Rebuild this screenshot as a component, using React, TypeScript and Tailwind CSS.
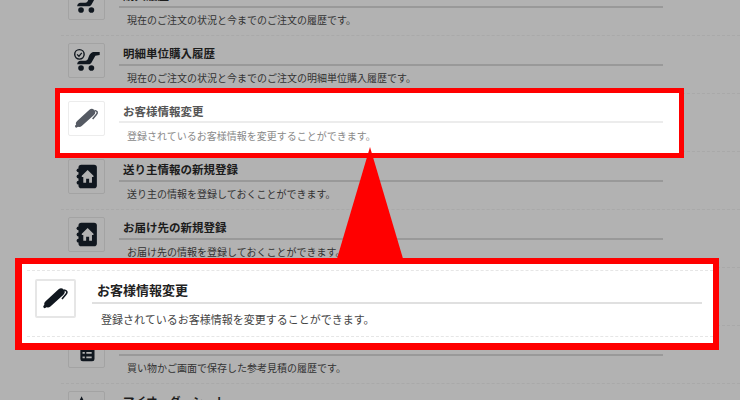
const font = "font-['Noto_Sans_CJK_JP','Noto_Sans',sans-serif]";

const CartIcon = ({ clock = false }: { clock?: boolean }) => (
  <svg viewBox="0 0 37 35" className="h-full w-full" fill="#10171f">
    {clock && (
      <g>
        <circle cx="11" cy="11" r="5" fill="none" stroke="#10171f" strokeWidth="1.5" />
        <path d="M8.5 11l2 2 3-3.5" fill="none" stroke="#10171f" strokeWidth="1.3" />
      </g>
    )}
    <path d="M32.5 8.6v3l-4.6.8-3.6 6.4c-1 1.8-2.2 2.8-4 2.8H8.6c.2-2.4 1.6-3.8 3.6-3.8h5c1.6-.2 2.6-1.2 3.2-3 1.2-3.4 3-6.2 6-6.2z" />
    <circle cx="12.7" cy="25.5" r="3" />
    <circle cx="23.7" cy="25.5" r="3" />
  </svg>
);

const PenIcon = ({ color }: { color: string }) => (
  <svg viewBox="0 0 37 35" className="h-full w-full" fill="none" stroke={color}>
    <path d="M11 22.8L24 11" strokeWidth="7.2" strokeLinecap="round" />
    <path d="M7.8 25.6l3-2" strokeWidth="3" strokeLinecap="round" />
    <path d="M27 9c3 .4 3.8 2.2 2 4.2L25 18" strokeWidth="1.6" />
  </svg>
);

const BookIcon = () => (
  <svg viewBox="0 0 37 35" className="h-full w-full">
    <rect x="10" y="5" width="19.5" height="25" rx="3" fill="#10171f" />
    <circle cx="10" cy="11" r="2" fill="#10171f" />
    <circle cx="10" cy="17.5" r="2" fill="#10171f" />
    <circle cx="10" cy="24" r="2" fill="#10171f" />
    <path d="M19.7 10.5l-6.2 6.2v1.3h1.6v6h3v-4h3.2v4h3v-6h1.6v-1.3z" fill="#b2b2b2" />
  </svg>
);

const ListIcon = () => (
  <svg viewBox="0 0 37 35" className="h-full w-full">
    <rect x="12" y="11" width="15" height="18" rx="2.5" fill="#10171f" />
    <path d="M14.3 19h2.4v2h-2.4zM18.3 19h5.7v2h-5.7zM14.3 23.8h2.4v2h-2.4zM18.3 23.8h5.7v2h-5.7z" fill="#b2b2b2" />
  </svg>
);

const StarIcon = () => (
  <svg viewBox="0 0 37 35" className="h-full w-full">
    <path d="M13.3 4.5l2.2 4.6 5 .7-3.6 3.5.8 5-4.4-2.4-4.4 2.4.8-5-3.6-3.5 5-.7z" fill="#10171f" />
  </svg>
);

const rows = [
  { icon: <CartIcon />, title: "購入履歴", desc: "現在のご注文の状況と今までのご注文の履歴です。" },
  { icon: <CartIcon clock />, title: "明細単位購入履歴", desc: "現在のご注文の状況と今までのご注文の明細単位購入履歴です。" },
  { icon: <PenIcon color="#10171f" />, title: "お客様情報変更", desc: "登録されているお客様情報を変更することができます。" },
  { icon: <BookIcon />, title: "送り主情報の新規登録", desc: "送り主の情報を登録しておくことができます。" },
  { icon: <BookIcon />, title: "お届け先の新規登録", desc: "お届け先の情報を登録しておくことができます。" },
  { icon: null, title: "", desc: "" },
  { icon: <ListIcon />, title: "参考見積履歴", desc: "買い物かご画面で保存した参考見積の履歴です。" },
  { icon: <StarIcon />, title: "マイオーダーシート", desc: "" },
];

const Row = ({ icon, title, desc }: (typeof rows)[0]) => (
  <div className="flex h-[58px] gap-[14px] border-t border-dashed border-[#a9a9a9] pl-[7px] pt-[7px]">
    <div className={icon ? "h-[35px] w-[37px] shrink-0 rounded-[2px] border border-[#a3a3a3]" : "h-[35px] w-[37px] shrink-0"}>
      {icon}
    </div>
    <div className="w-[544px]">
      <div className="h-[23px] border-b-2 border-[#999999] pl-[4px] text-[11.5px] leading-[20px] font-bold text-[#1c1c1c]">
        {title}
      </div>
      <div className="pl-[8px] pt-[4px] text-[10px] leading-[16px] text-[#333333]">{desc}</div>
    </div>
  </div>
);

export default function App() {
  return (
    <div className={`relative h-[400px] w-[740px] overflow-hidden bg-[#b2b2b2] ${font}`}>
      {/* dimmed list */}
      <div className="mt-[-23px] pl-[61px]">
        {rows.map((row, i) => (
          <Row key={i} {...row} />
        ))}
      </div>

      {/* small highlight */}
      <div className="absolute left-[55px] top-[88px] h-[70px] w-[629px] border-[5px] border-[#ff0000] bg-white pl-[8px] pt-[8px]">
        <div className="flex gap-[14px]">
          <div className="h-[35px] w-[37px] shrink-0 rounded-[2px] border border-[#ececec]">
            <PenIcon color="#555a63" />
          </div>
          <div className="w-[544px]">
            <div className="h-[22px] border-b-2 border-[#ececec] pl-[4px] text-[11.5px] leading-[20px] font-bold text-[#555555]">
              お客様情報変更
            </div>
            <div className="pl-[8px] pt-[5px] text-[10px] leading-[16px] text-[#8a8a8a]">
              登録されているお客様情報を変更することができます。
            </div>
          </div>
        </div>
      </div>

      {/* arrow */}
      <svg className="absolute left-[330px] top-[140px] h-[125px] w-[80px]" viewBox="0 0 80 125">
        <polygon points="40,7 6,122 74,122" fill="#ff0000" />
      </svg>

      {/* large highlight */}
      <div className="absolute left-[15px] top-[258px] h-[92px] w-[704px] border-y-[6px] border-r-[6px] border-b-[7px] border-l-[7px] border-[#ff0000] bg-white pl-[5px] pt-[6px]">
        <div className="h-[67px] border-y border-dashed border-[#e6e6e6] pl-[8px] pt-[8px]">
          <div className="flex gap-[16px]">
            <div className="h-[39px] w-[41px] shrink-0 rounded-[2px] border-2 border-[#e6e6e6]">
              <PenIcon color="#10171f" />
            </div>
            <div className="w-[610px]">
              <div className="h-[25px] border-b-2 border-[#e0e0e0] pl-[5px] text-[13px] leading-[22px] font-bold text-[#222222]">
                お客様情報変更
              </div>
              <div className="pl-[9px] pt-[7px] text-[11px] leading-[16px] text-[#444444]">
                登録されているお客様情報を変更することができます。
              </div>
            </div>
          </div>
        </div>
      </div>
    </div>
  );
}
